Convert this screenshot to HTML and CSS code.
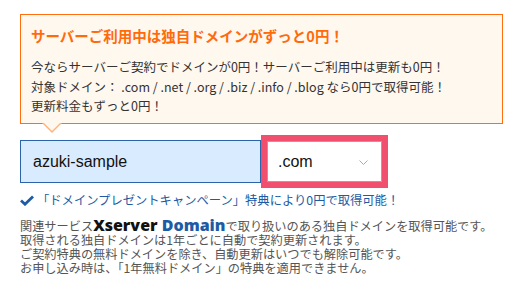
FILE: index.html
```html
<!DOCTYPE html>
<html lang="ja">
<head>
  <meta charset="UTF-8">
  <meta name="viewport" content="width=device-width, initial-scale=1">
  <title>独自ドメイン取得</title>
  <link rel="stylesheet" href="styles.css">
</head>
<body>

<div class="domain-box">
  <div class="campaign">
    <h2 class="campaign-title">サーバーご利用中は独自ドメインがずっと0円！</h2>
    <p class="campaign-text">
      今ならサーバーご契約でドメインが0円！サーバーご利用中は更新も0円！<br>
      対象ドメイン： .com / .net / .org / .biz / .info / .blog なら0円で取得可能！<br>
      更新料金もずっと0円！
    </p>
  </div>

  <form class="domain-form">
    <input type="text" class="domain-input" value="azuki-sample">
    <div class="select-wrap">
      <select class="domain-select">
        <option>.com</option>
        <option>.net</option>
        <option>.org</option>
        <option>.biz</option>
        <option>.info</option>
        <option>.blog</option>
      </select>
      <svg class="chevron" width="9" height="5" viewBox="0 0 9 5">
        <path d="M0.5 0.5 L4.5 4.5 L8.5 0.5" fill="none" stroke="#aaa" stroke-width="1"/>
      </svg>
    </div>
  </form>

  <p class="present">
    <svg class="check" width="14" height="11" viewBox="0 0 14 11">
      <path d="M1 5.5 L5 9.2 L13 1.5" fill="none" stroke="#1d5ba4" stroke-width="2.8"/>
    </svg>
    「ドメインプレゼントキャンペーン」特典により0円で取得可能！
  </p>

  <p class="notes">
    関連サービス<span class="brand">Xserver <span class="brand-blue">Domain</span></span>で取り扱いのある独自ドメインを取得可能です。<br>
    取得される独自ドメインは1年ごとに自動で契約更新されます。<br>
    ご契約特典の無料ドメインを除き、自動更新はいつでも解除可能です。<br>
    お申し込み時は、「1年無料ドメイン」の特典を適用できません。
  </p>
</div>

</body>
</html>
```

FILE: styles.css
```css
* {
  box-sizing: border-box;
}

body {
  margin: 0;
  font-family: 'Noto Sans CJK JP', sans-serif;
  color: #333;
  background-color: #fff;
}

.domain-box {
  width: 503px;
  padding: 14px 0 0 20px;
}

.campaign {
  position: relative;
  border: 1px solid #ff6f0f;
  background-color: #fff8ef;
  padding: 10px 10px 8px 10px;
  height: 110px;
}

/* pointer under the box */
.campaign::before,
.campaign::after {
  content: '';
  position: absolute;
  left: 21px;
  border-style: solid;
  border-color: transparent;
}

.campaign::before {
  bottom: -10px;
  border-width: 10px 10px 0 10px;
  border-top-color: #ffb27a;
}

.campaign::after {
  bottom: -8px;
  left: 22px;
  border-width: 9px 9px 0 9px;
  border-top-color: #fff8ef;
}

.campaign-title {
  margin: 0;
  font-size: 14.5px;
  line-height: 21px;
  font-weight: bold;
  color: #ff6a0a;
}

.campaign-text {
  margin: 11px 0 0 0;
  font-size: 12.5px;
  line-height: 19.5px;
}

.domain-form {
  display: flex;
  align-items: center;
  margin-top: 11px;
}

.domain-input {
  width: 241px;
  height: 43px;
  margin: 0;
  padding: 0 12px;
  border: 1px solid #2a64ab;
  background-color: #d9ebff;
  font-family: 'Liberation Sans', Arial, sans-serif;
  font-size: 16px;
  color: #111;
}

.select-wrap {
  position: relative;
  border: 6px solid #f0506e;
  background-color: #fff;
}

.domain-select {
  display: block;
  width: 115px;
  height: 41px;
  margin: 0;
  padding: 0 10px;
  border: 1px solid #a3a3a3;
  background-color: #fff;
  font-family: 'Liberation Sans', Arial, sans-serif;
  font-size: 16px;
  color: #111;
  -webkit-appearance: none;
  appearance: none;
}

.chevron {
  position: absolute;
  right: 14px;
  top: 19px;
}

.present {
  display: flex;
  align-items: center;
  margin: 3px 0 0 0;
  font-size: 12.3px;
  line-height: 18px;
  color: #1d5ba4;
}

.check {
  margin-right: 3px;
}

.notes {
  margin: 8px 0 0 0;
  font-size: 12.2px;
  line-height: 14px;
  color: #555;
}

.brand {
  font-family: 'Open Sans', Lato, sans-serif;
  font-weight: 800;
  font-size: 16px;
  line-height: 16px;
  color: #111;
}

.brand-blue {
  color: #1d5ba4;
}
```
